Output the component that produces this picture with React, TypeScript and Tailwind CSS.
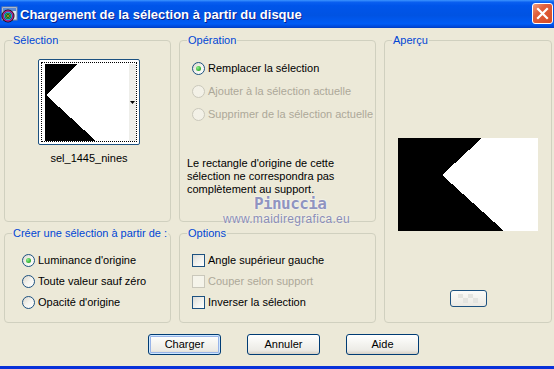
import React from "react";

const font = { fontFamily: '"Liberation Sans", Arial, sans-serif' };

function Radio({ checked, disabled, label }: { checked?: boolean; disabled?: boolean; label: string }) {
  return (
    <div className="flex items-center gap-[3px]">
      <div
        className={
          disabled
            ? "w-[13px] h-[13px] rounded-full border border-[#cac8bb] bg-[#f3f1e7] flex items-center justify-center"
            : "w-[13px] h-[13px] rounded-full border border-[#1c5180] bg-[linear-gradient(135deg,#dcd7cb_0%,#f4f3ee_50%,#ffffff_100%)] flex items-center justify-center"
        }
      >
        {checked && <div className="w-[5px] h-[5px] rounded-full bg-[radial-gradient(circle_at_35%_35%,#8ef08b_0%,#21a121_80%)]" />}
      </div>
      <span className={disabled ? "text-[#aca899]" : "text-black"}>{label}</span>
    </div>
  );
}

function Check({ disabled, label }: { disabled?: boolean; label: string }) {
  return (
    <div className="flex items-center gap-[3px]">
      <div
        className={
          disabled
            ? "w-[13px] h-[13px] border border-[#cac8bb] bg-[#f5f4ea]"
            : "w-[13px] h-[13px] border border-[#1c5180] bg-[linear-gradient(135deg,#dcdcd7_0%,#f2f2ee_55%,#ffffff_100%)]"
        }
      />
      <span className={disabled ? "text-[#aca899]" : "text-black"}>{label}</span>
    </div>
  );
}

function XPButton({ label, def }: { label: string; def?: boolean }) {
  return (
    <div
      className={
        "w-[73px] h-[21px] rounded-[3px] border border-[#003c74] bg-[linear-gradient(to_bottom,#ffffff_0%,#f4f4f0_45%,#ecebe6_80%,#d6d0c5_100%)] flex items-center justify-center text-black " +
        (def ? "shadow-[inset_0_0_0_1px_#cee7ff,inset_0_0_0_2px_#98b4e8]" : "")
      }
    >
      {label}
    </div>
  );
}

export default function App() {
  return (
    <div className="relative w-[554px] h-[369px] bg-[#ece9d8] text-[11px] leading-[13px] overflow-hidden" style={font}>
      {/* Title bar */}
      <div className="h-[28px] flex items-center bg-[linear-gradient(to_bottom,#3d95ff_0%,#0a5ff0_8%,#0055ea_20%,#0053e3_55%,#005cf6_85%,#0047d6_96%,#003cc0_100%)]">
        <svg width="18" height="18" viewBox="0 0 18 18" className="mt-[1px]">
          <rect x="2" y="1" width="15" height="13" fill="#dfe6f0" stroke="#7c8a9e" />
          <rect x="3" y="2" width="13" height="3" fill="#5a8ad8" />
          <circle cx="8" cy="10" r="6.5" fill="#111" />
          <circle cx="8" cy="10" r="5" fill="none" stroke="#c02090" strokeWidth="1.3" />
          <circle cx="8" cy="10" r="3.6" fill="none" stroke="#20a0e0" strokeWidth="1.2" />
          <circle cx="8" cy="10" r="2.2" fill="none" stroke="#40c040" strokeWidth="1.1" />
          <circle cx="8" cy="10" r="0.9" fill="#e0c020" />
        </svg>
        <span className="ml-[2px] text-white font-bold text-[13px] [text-shadow:1px_1px_0_#0a1e8c]">
          Chargement de la sélection à partir du disque
        </span>
        <div className="ml-auto mr-[1px] mt-[-2px] w-[21px] h-[21px] rounded-[3px] border border-white bg-[linear-gradient(135deg,#f0a080_0%,#e2603c_35%,#d44a24_100%)] flex items-center justify-center">
          <svg width="13" height="13" viewBox="0 0 13 13">
            <path d="M2 2 L11 11 M11 2 L2 11" stroke="white" strokeWidth="2.2" strokeLinecap="square" />
          </svg>
        </div>
      </div>

      {/* Body */}
      <div className="h-[338px] pl-[4px] pt-[6px] flex flex-col">
        <div className="grid grid-cols-[167px_197px_168px] grid-rows-[188px_96px] gap-x-[8px] gap-y-[5px]">
          {/* Sélection */}
          <fieldset className="border border-[#d0d0bf] rounded-[4px]">
            <legend className="ml-[7px] px-[1px] text-[#0046d5]">Sélection</legend>
            <div className="pl-[33px] pt-[12px] flex flex-col items-center w-[135px]">
              <div className="w-[102px] h-[86px] border border-[#1c5180] rounded-[2px] bg-white p-[2px]">
                <div className="w-full h-full border border-dotted border-black pl-[3px] pt-[1px] flex">
                  <svg width="84" height="77" viewBox="0 0 84 77" shapeRendering="crispEdges">
                    <rect width="84" height="77" fill="#000" />
                    <polygon points="33,0 84,0 84,77 51,77 1,31" fill="#fff" />
                  </svg>
                  <div className="w-[7px] h-[77px] bg-[#eeeeea] flex items-center justify-center">
                    <svg width="5" height="3" viewBox="0 0 5 3">
                      <polygon points="0,0 5,0 2.5,3" fill="#000" />
                    </svg>
                  </div>
                </div>
              </div>
              <div className="mt-[7px] text-black">sel_1445_nines</div>
            </div>
          </fieldset>

          {/* Opération */}
          <fieldset className="border border-[#d0d0bf] rounded-[4px]">
            <legend className="ml-[7px] px-[1px] text-[#0046d5]">Opération</legend>
            <div className="pl-[12px] pt-[10px] flex flex-col">
              <div className="h-[23px] flex items-center"><Radio checked label="Remplacer la sélection" /></div>
              <div className="h-[23px] flex items-center"><Radio disabled label="Ajouter à la sélection actuelle" /></div>
              <div className="h-[23px] flex items-center"><Radio disabled label="Supprimer de la sélection actuelle" /></div>
            </div>
            <div className="pl-[7px] mt-[31px] leading-[13px] text-black">
              Le rectangle d'origine de cette<br />
              sélection ne correspondra pas<br />
              complètement au support.
            </div>
          </fieldset>

          {/* Aperçu */}
          <fieldset className="row-span-2 border border-[#d0d0bf] rounded-[4px]">
            <legend className="ml-[7px] px-[1px] text-[#0046d5]">Aperçu</legend>
            <div className="flex flex-col items-center pt-[91px]">
              <svg width="140" height="93" viewBox="0 0 140 93" shapeRendering="crispEdges">
                <rect width="140" height="93" fill="#000" />
                <polygon points="84,0 140,0 140,93 106,93 44,37" fill="#fff" />
              </svg>
              <div className="mt-[59px] w-[37px] h-[17px] rounded-[3px] border border-[#1c5180] bg-[linear-gradient(to_bottom,#fbfbf9,#eceae3)] flex items-center justify-center">
                <svg width="20" height="9" viewBox="0 0 20 9" shapeRendering="crispEdges">
                  <rect x="0" y="0" width="5" height="4" fill="#e4e4e0" />
                  <rect x="10" y="0" width="5" height="4" fill="#e4e4e0" />
                  <rect x="5" y="4" width="5" height="5" fill="#e4e4e0" />
                  <rect x="15" y="4" width="5" height="5" fill="#e4e4e0" />
                </svg>
              </div>
            </div>
          </fieldset>

          {/* Créer */}
          <fieldset className="border border-[#d0d0bf] rounded-[4px]">
            <legend className="ml-[7px] px-[1px] text-[#0046d5]">Créer une sélection à partir de :</legend>
            <div className="pl-[17px] pt-[10px] flex flex-col">
              <div className="h-[21px] flex items-center"><Radio checked label="Luminance d'origine" /></div>
              <div className="h-[21px] flex items-center"><Radio label="Toute valeur sauf zéro" /></div>
              <div className="h-[21px] flex items-center"><Radio label="Opacité d'origine" /></div>
            </div>
          </fieldset>

          {/* Options */}
          <fieldset className="border border-[#d0d0bf] rounded-[4px]">
            <legend className="ml-[7px] px-[1px] text-[#0046d5]">Options</legend>
            <div className="pl-[12px] pt-[10px] flex flex-col">
              <div className="h-[21px] flex items-center"><Check label="Angle supérieur gauche" /></div>
              <div className="h-[21px] flex items-center"><Check disabled label="Couper selon support" /></div>
              <div className="h-[21px] flex items-center"><Check label="Inverser la sélection" /></div>
            </div>
          </fieldset>
        </div>

        <div className="mt-[11px] flex gap-[26px] pl-[144px]">
          <XPButton def label="Charger" />
          <XPButton label="Annuler" />
          <XPButton label="Aide" />
        </div>
      </div>

      <div className="h-[3px] bg-[#0831d9]" />

      {/* Watermark */}
      <div className="absolute left-[254px] top-[197px] text-[16px] leading-[14px] font-bold text-[#9094bf] tracking-[-0.6px] [text-shadow:0_0_2px_#ffffff,0_0_1px_#ffffff]" style={{ fontFamily: '"DejaVu Sans Mono", monospace' }}>
        Pinuccia
      </div>
      <div className="absolute left-[223px] top-[212px] text-[12px] leading-[14px] text-[#8a8db5] tracking-[0.3px] [text-shadow:0_0_2px_#ffffff]">
        www.maidiregrafica.eu
      </div>
    </div>
  );
}
